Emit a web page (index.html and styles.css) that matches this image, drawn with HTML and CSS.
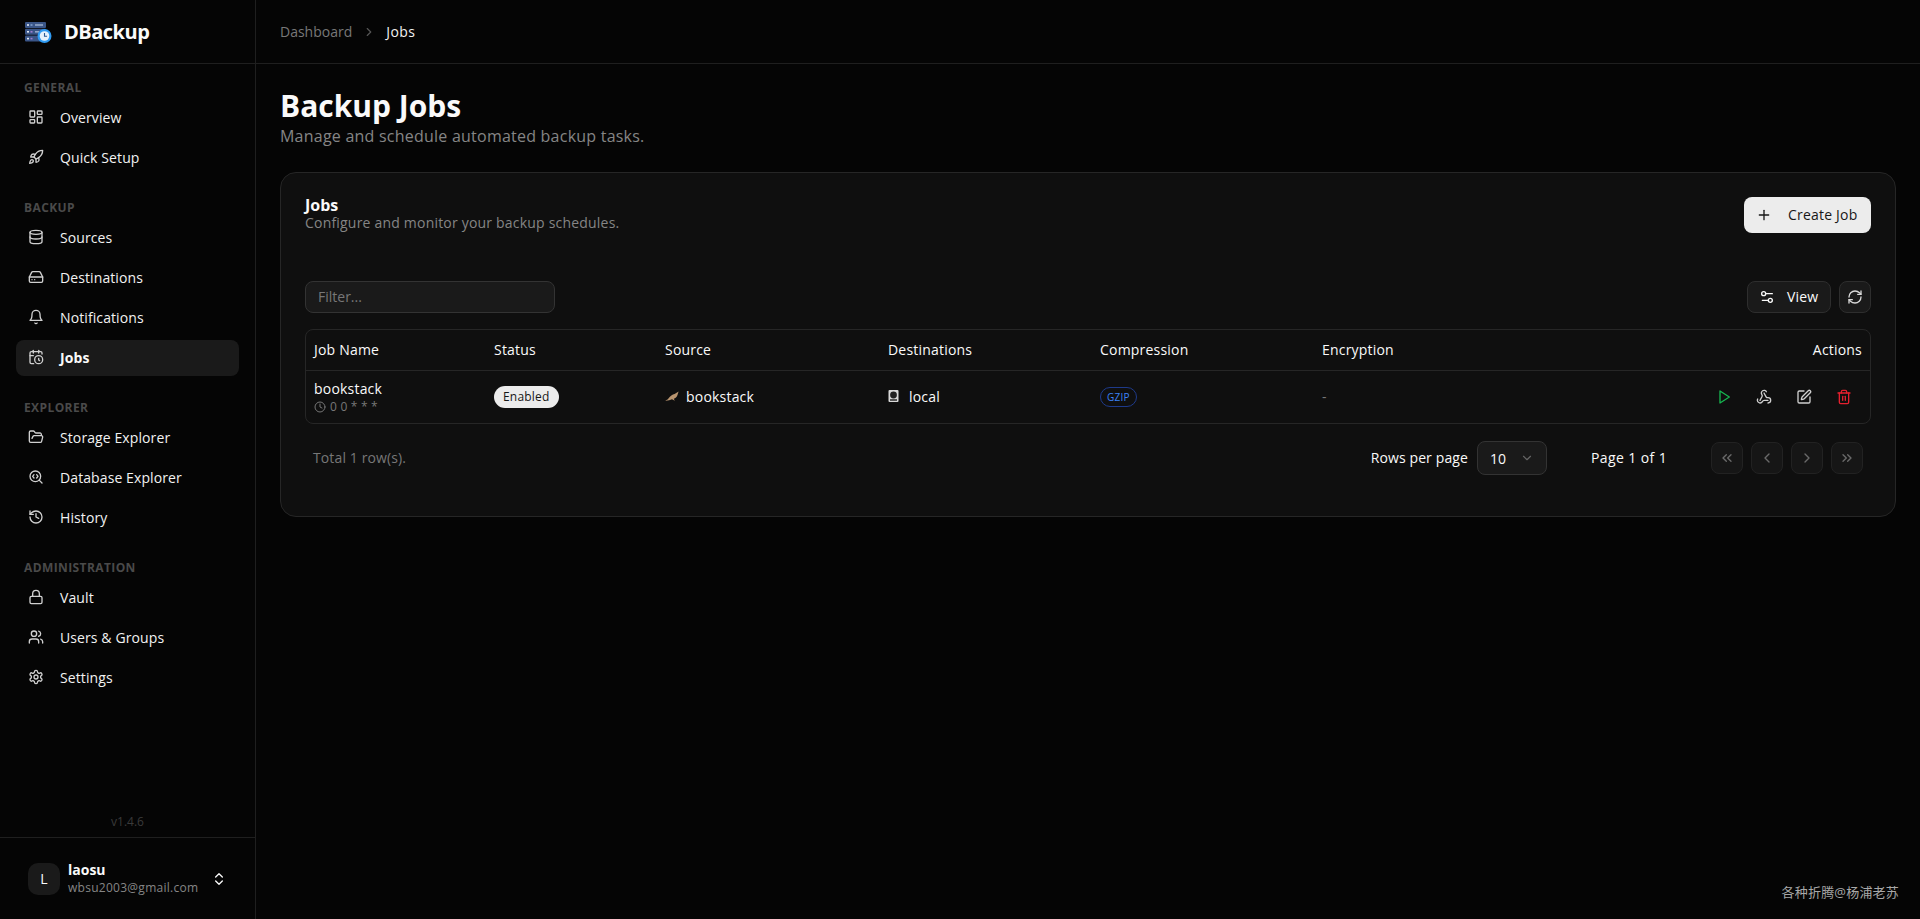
FILE: index.html
```html
<!DOCTYPE html>
<html lang="en">
<head>
    <meta charset="UTF-8">
    <meta name="viewport" content="width=device-width, initial-scale=1.0">
    <title>DBackup - Jobs</title>
    <link rel="stylesheet" href="styles.css">
</head>
<body>
    <svg class="sprite" aria-hidden="true">
        <symbol id="i-overview" viewBox="0 0 24 24"><rect x="3" y="3" width="7" height="9" rx="1"/><rect x="14" y="3" width="7" height="5" rx="1"/><rect x="14" y="12" width="7" height="9" rx="1"/><rect x="3" y="16" width="7" height="5" rx="1"/></symbol>
        <symbol id="i-rocket" viewBox="0 0 24 24"><path d="M4.5 16.5c-1.5 1.26-2 5-2 5s3.74-.5 5-2c.71-.84.7-2.13-.09-2.91a2.18 2.18 0 0 0-2.91-.09z"/><path d="m12 15-3-3a22 22 0 0 1 2-3.95A12.88 12.88 0 0 1 22 2c0 2.72-.78 7.5-6 11a22.35 22.35 0 0 1-4 2z"/><path d="M9 12H4s.55-3.03 2-4c1.62-1.08 5 0 5 0"/><path d="M12 15v5s3.03-.55 4-2c1.08-1.62 0-5 0-5"/></symbol>
        <symbol id="i-database" viewBox="0 0 24 24"><ellipse cx="12" cy="5" rx="9" ry="3"/><path d="M3 5V19A9 3 0 0 0 21 19V5"/><path d="M3 12A9 3 0 0 0 21 12"/></symbol>
        <symbol id="i-drive" viewBox="0 0 24 24"><line x1="22" y1="12" x2="2" y2="12"/><path d="M5.45 5.11 2 12v6a2 2 0 0 0 2 2h16a2 2 0 0 0 2-2v-6l-3.45-6.89A2 2 0 0 0 16.76 4H7.24a2 2 0 0 0-1.79 1.11z"/><line x1="6" y1="16" x2="6.01" y2="16"/><line x1="10" y1="16" x2="10.01" y2="16"/></symbol>
        <symbol id="i-bell" viewBox="0 0 24 24"><path d="M6 8a6 6 0 0 1 12 0c0 7 3 9 3 9H3s3-2 3-9"/><path d="M10.3 21a1.94 1.94 0 0 0 3.4 0"/></symbol>
        <symbol id="i-calendar" viewBox="0 0 24 24"><path d="M21 7.5V6a2 2 0 0 0-2-2H5a2 2 0 0 0-2 2v14a2 2 0 0 0 2 2h3.5"/><path d="M16 2v4"/><path d="M8 2v4"/><path d="M3 10h5"/><path d="M17.5 17.5 16 16.3V14"/><circle cx="16" cy="16" r="6"/></symbol>
        <symbol id="i-folder" viewBox="0 0 24 24"><path d="m6 14 1.5-2.9A2 2 0 0 1 9.24 10H20a2 2 0 0 1 1.94 2.5l-1.54 6a2 2 0 0 1-1.95 1.5H4a2 2 0 0 1-2-2V5a2 2 0 0 1 2-2h3.9a2 2 0 0 1 1.69.9l.81 1.2a2 2 0 0 0 1.67.9H18a2 2 0 0 1 2 2v2"/></symbol>
        <symbol id="i-search-code" viewBox="0 0 24 24"><path d="m13 13.5 2-2.5-2-2.5"/><path d="m21 21-4.3-4.3"/><path d="M9 8.5 7 11l2 2.5"/><circle cx="11" cy="11" r="8"/></symbol>
        <symbol id="i-history" viewBox="0 0 24 24"><path d="M3 12a9 9 0 1 0 9-9 9.75 9.75 0 0 0-6.74 2.74L3 8"/><path d="M3 3v5h5"/><path d="M12 7v5l4 2"/></symbol>
        <symbol id="i-lock" viewBox="0 0 24 24"><rect x="3" y="11" width="18" height="11" rx="2"/><path d="M7 11V7a5 5 0 0 1 10 0v4"/></symbol>
        <symbol id="i-users" viewBox="0 0 24 24"><path d="M16 21v-2a4 4 0 0 0-4-4H6a4 4 0 0 0-4 4v2"/><circle cx="9" cy="7" r="4"/><path d="M22 21v-2a4 4 0 0 0-3-3.87"/><path d="M16 3.13a4 4 0 0 1 0 7.75"/></symbol>
        <symbol id="i-settings" viewBox="0 0 24 24"><path d="M12.22 2h-.44a2 2 0 0 0-2 2v.18a2 2 0 0 1-1 1.73l-.43.25a2 2 0 0 1-2 0l-.15-.08a2 2 0 0 0-2.73.73l-.22.38a2 2 0 0 0 .73 2.73l.15.1a2 2 0 0 1 1 1.72v.51a2 2 0 0 1-1 1.74l-.15.09a2 2 0 0 0-.73 2.73l.22.38a2 2 0 0 0 2.73.73l.15-.08a2 2 0 0 1 2 0l.43.25a2 2 0 0 1 1 1.73V20a2 2 0 0 0 2 2h.44a2 2 0 0 0 2-2v-.18a2 2 0 0 1 1-1.73l.43-.25a2 2 0 0 1 2 0l.15.08a2 2 0 0 0 2.73-.73l.22-.39a2 2 0 0 0-.73-2.73l-.15-.08a2 2 0 0 1-1-1.74v-.5a2 2 0 0 1 1-1.74l.15-.09a2 2 0 0 0 .73-2.73l-.22-.38a2 2 0 0 0-2.73-.73l-.15.08a2 2 0 0 1-2 0l-.43-.25a2 2 0 0 1-1-1.73V4a2 2 0 0 0-2-2z"/><circle cx="12" cy="12" r="3"/></symbol>
        <symbol id="i-updown" viewBox="0 0 24 24"><path d="m7 15 5 5 5-5"/><path d="m7 9 5-5 5 5"/></symbol>
        <symbol id="i-plus" viewBox="0 0 24 24"><path d="M5 12h14"/><path d="M12 5v14"/></symbol>
        <symbol id="i-sliders" viewBox="0 0 24 24"><path d="M20 7h-9"/><path d="M14 17H5"/><circle cx="17" cy="17" r="3"/><circle cx="7" cy="7" r="3"/></symbol>
        <symbol id="i-refresh" viewBox="0 0 24 24"><path d="M3 12a9 9 0 0 1 9-9 9.75 9.75 0 0 1 6.74 2.74L21 8"/><path d="M21 3v5h-5"/><path d="M21 12a9 9 0 0 1-9 9 9.75 9.75 0 0 1-6.74-2.74L3 16"/><path d="M8 16H3v5"/></symbol>
        <symbol id="i-play" viewBox="0 0 24 24"><polygon points="6 3 20 12 6 21 6 3"/></symbol>
        <symbol id="i-webhook" viewBox="0 0 24 24"><path d="M18 16.98h-5.99c-1.1 0-1.95.94-2.48 1.9A4 4 0 0 1 2 17c.01-.7.2-1.4.57-2"/><path d="m6 17 3.13-5.78c.53-.97.1-2.18-.5-3.1a4 4 0 1 1 6.89-4.06"/><path d="m12 6 3.13 5.73C15.66 12.7 16.9 13 18 13a4 4 0 0 1 0 8"/></symbol>
        <symbol id="i-pen" viewBox="0 0 24 24"><path d="M12 3H5a2 2 0 0 0-2 2v14a2 2 0 0 0 2 2h14a2 2 0 0 0 2-2v-7"/><path d="M18.375 2.625a1 1 0 0 1 3 3l-9.013 9.014a2 2 0 0 1-.853.505l-2.873.84a.5.5 0 0 1-.62-.62l.84-2.873a2 2 0 0 1 .506-.852z"/></symbol>
        <symbol id="i-trash" viewBox="0 0 24 24"><path d="M3 6h18"/><path d="M19 6v14c0 1-1 2-2 2H7c-1 0-2-1-2-2V6"/><path d="M8 6V4c0-1 1-2 2-2h4c1 0 2 1 2 2v2"/><line x1="10" y1="11" x2="10" y2="17"/><line x1="14" y1="11" x2="14" y2="17"/></symbol>
        <symbol id="i-clock" viewBox="0 0 24 24"><circle cx="12" cy="12" r="10"/><polyline points="12 6 12 12 16 14"/></symbol>
        <symbol id="i-down" viewBox="0 0 24 24"><path d="m6 9 6 6 6-6"/></symbol>
        <symbol id="i-right" viewBox="0 0 24 24"><path d="m9 18 6-6-6-6"/></symbol>
        <symbol id="i-left" viewBox="0 0 24 24"><path d="m15 18-6-6 6-6"/></symbol>
        <symbol id="i-first" viewBox="0 0 24 24"><path d="m11 17-5-5 5-5"/><path d="m18 17-5-5 5-5"/></symbol>
        <symbol id="i-last" viewBox="0 0 24 24"><path d="m6 17 5-5-5-5"/><path d="m13 17 5-5-5-5"/></symbol>
    </svg>

    <div class="app">
        <aside class="sidebar">
            <div class="brand">
                <svg class="brand-logo" viewBox="0 0 28 24">
                    <rect x="0" y="2" width="21" height="6" rx="1" fill="#3a5587"/>
                    <rect x="0" y="8.8" width="21" height="6" rx="1" fill="#3a5587"/>
                    <rect x="0" y="15.6" width="21" height="6" rx="1" fill="#3a5587"/>
                    <rect x="2" y="4.2" width="2" height="1.6" fill="#dfe6f0"/>
                    <rect x="5.5" y="4.2" width="2" height="1.6" fill="#7fa0cc"/>
                    <rect x="10" y="4.2" width="8" height="1.6" fill="#93a8c8"/>
                    <rect x="2" y="11" width="2" height="1.6" fill="#dfe6f0"/>
                    <rect x="5.5" y="11" width="2" height="1.6" fill="#9d7ed0"/>
                    <rect x="10" y="11" width="4" height="1.6" fill="#93a8c8"/>
                    <rect x="2" y="17.8" width="2" height="1.6" fill="#dfe6f0"/>
                    <rect x="5.5" y="17.8" width="2" height="1.6" fill="#9d7ed0"/>
                    <circle cx="19.5" cy="16" r="7" fill="#2f9bf2"/>
                    <circle cx="19.5" cy="16" r="4.8" fill="#e6f2fc"/>
                    <path d="M19.5 13v3.2h2.6" fill="none" stroke="#2a5a94" stroke-width="1.1"/>
                </svg>
                <span class="brand-name">DBackup</span>
            </div>

            <nav class="nav">
                <div class="nav-group">
                    <div class="nav-label">GENERAL</div>
                    <a class="nav-item"><svg class="icon"><use href="#i-overview"/></svg>Overview</a>
                    <a class="nav-item"><svg class="icon"><use href="#i-rocket"/></svg>Quick Setup</a>
                </div>
                <div class="nav-group">
                    <div class="nav-label">BACKUP</div>
                    <a class="nav-item"><svg class="icon"><use href="#i-database"/></svg>Sources</a>
                    <a class="nav-item"><svg class="icon"><use href="#i-drive"/></svg>Destinations</a>
                    <a class="nav-item"><svg class="icon"><use href="#i-bell"/></svg>Notifications</a>
                    <a class="nav-item active"><svg class="icon"><use href="#i-calendar"/></svg>Jobs</a>
                </div>
                <div class="nav-group">
                    <div class="nav-label">EXPLORER</div>
                    <a class="nav-item"><svg class="icon"><use href="#i-folder"/></svg>Storage Explorer</a>
                    <a class="nav-item"><svg class="icon"><use href="#i-search-code"/></svg>Database Explorer</a>
                    <a class="nav-item"><svg class="icon"><use href="#i-history"/></svg>History</a>
                </div>
                <div class="nav-group">
                    <div class="nav-label">ADMINISTRATION</div>
                    <a class="nav-item"><svg class="icon"><use href="#i-lock"/></svg>Vault</a>
                    <a class="nav-item"><svg class="icon"><use href="#i-users"/></svg>Users &amp; Groups</a>
                    <a class="nav-item"><svg class="icon"><use href="#i-settings"/></svg>Settings</a>
                </div>
            </nav>

            <div class="version">v1.4.6</div>
            <div class="user">
                <div class="avatar">L</div>
                <div class="user-info">
                    <div class="user-name">laosu</div>
                    <div class="user-mail">wbsu2003@gmail.com</div>
                </div>
                <svg class="icon user-toggle"><use href="#i-updown"/></svg>
            </div>
        </aside>

        <div class="content">
            <header class="topbar">
                <span class="crumb">Dashboard</span>
                <svg class="icon crumb-sep"><use href="#i-right"/></svg>
                <span class="crumb-current">Jobs</span>
            </header>

            <main class="main">
                <h1 class="page-title">Backup Jobs</h1>
                <p class="page-sub">Manage and schedule automated backup tasks.</p>

                <section class="card">
                    <div class="card-head">
                        <div>
                            <h2 class="card-title">Jobs</h2>
                            <p class="card-sub">Configure and monitor your backup schedules.</p>
                        </div>
                        <button class="btn btn-primary"><svg class="icon"><use href="#i-plus"/></svg><span>Create Job</span></button>
                    </div>

                    <div class="toolbar">
                        <input class="filter" type="text" placeholder="Filter...">
                        <div class="toolbar-right">
                            <button class="btn btn-outline"><svg class="icon"><use href="#i-sliders"/></svg><span>View</span></button>
                            <button class="btn-square"><svg class="icon"><use href="#i-refresh"/></svg></button>
                        </div>
                    </div>

                    <div class="table-wrap">
                        <table class="jobs">
                            <colgroup>
                                <col class="col-name"><col class="col-status"><col class="col-source"><col class="col-dest"><col class="col-comp"><col class="col-enc"><col>
                            </colgroup>
                            <thead>
                                <tr>
                                    <th>Job Name</th>
                                    <th>Status</th>
                                    <th>Source</th>
                                    <th>Destinations</th>
                                    <th>Compression</th>
                                    <th>Encryption</th>
                                    <th class="th-actions">Actions</th>
                                </tr>
                            </thead>
                            <tbody>
                                <tr>
                                    <td>
                                        <div class="job-name">bookstack</div>
                                        <div class="job-cron"><svg class="icon icon-xs"><use href="#i-clock"/></svg>0 0 * * *</div>
                                    </td>
                                    <td><span class="badge-status">Enabled</span></td>
                                    <td>
                                        <span class="cell-icon">
                                            <svg class="mini" viewBox="0 0 14 10"><path d="M0 9.6c1.6-.3 2.6-1.1 3.6-2.4C5.2 5 7.4 3.4 9.6 3l4-2.6-1.2 3.8c-.6 1.8-2 3-3.6 3.6l1 2-2.8-1.6C5 8.9 2.4 10 0 9.6z" fill="#b8946f"/></svg>
                                            bookstack
                                        </span>
                                    </td>
                                    <td>
                                        <span class="cell-icon">
                                            <svg class="mini-drive" viewBox="0 0 10 12"><rect width="10" height="12" rx="1" fill="#d8d8d8"/><circle cx="5" cy="5" r="3.4" fill="#222"/><rect x="1.5" y="9.2" width="7" height="1.6" fill="#333"/></svg>
                                            local
                                        </span>
                                    </td>
                                    <td><span class="badge-comp">GZIP</span></td>
                                    <td class="muted-dash">-</td>
                                    <td>
                                        <div class="actions">
                                            <button class="act act-play"><svg class="icon"><use href="#i-play"/></svg></button>
                                            <button class="act"><svg class="icon"><use href="#i-webhook"/></svg></button>
                                            <button class="act"><svg class="icon"><use href="#i-pen"/></svg></button>
                                            <button class="act act-del"><svg class="icon"><use href="#i-trash"/></svg></button>
                                        </div>
                                    </td>
                                </tr>
                            </tbody>
                        </table>
                    </div>

                    <div class="pager">
                        <span class="pager-total">Total 1 row(s).</span>
                        <div class="pager-right">
                            <span class="pager-rows">Rows per page</span>
                            <div class="select">10<svg class="icon"><use href="#i-down"/></svg></div>
                            <span class="pager-page">Page 1 of 1</span>
                            <div class="pager-btns">
                                <button class="page-btn"><svg class="icon"><use href="#i-first"/></svg></button>
                                <button class="page-btn"><svg class="icon"><use href="#i-left"/></svg></button>
                                <button class="page-btn"><svg class="icon"><use href="#i-right"/></svg></button>
                                <button class="page-btn"><svg class="icon"><use href="#i-last"/></svg></button>
                            </div>
                        </div>
                    </div>
                </section>
            </main>
        </div>
    </div>

    <div class="watermark">各种折腾@杨浦老苏</div>
</body>
</html>
```

FILE: styles.css
```css
* {
    margin: 0;
    padding: 0;
    box-sizing: border-box;
    font-family: 'Open Sans', 'Noto Sans CJK SC', sans-serif;
}

html, body {
    width: 100%;
    height: 100%;
    overflow: hidden;
    background-color: #050505;
    color: #fafafa;
    font-size: 14px;
}

.sprite {
    display: none;
}

.icon {
    width: 16px;
    height: 16px;
    flex-shrink: 0;
    fill: none;
    stroke: currentColor;
    stroke-width: 2;
    stroke-linecap: round;
    stroke-linejoin: round;
}

.icon-xs {
    width: 12px;
    height: 12px;
}

.app {
    display: flex;
    height: 100%;
}

/* sidebar */
.sidebar {
    width: 256px;
    flex-shrink: 0;
    display: flex;
    flex-direction: column;
    border-right: 1px solid #1f1f1f;
}

.brand {
    height: 64px;
    flex-shrink: 0;
    display: flex;
    align-items: center;
    gap: 11px;
    padding-left: 25px;
    border-bottom: 1px solid #1f1f1f;
}

.brand-logo {
    width: 28px;
    height: 24px;
}

.brand-name {
    font-size: 20px;
    font-weight: 700;
    letter-spacing: -0.5px;
}

.nav {
    flex: 1;
    padding: 16px 16px 0;
    display: flex;
    flex-direction: column;
    gap: 24px;
}

.nav-group {
    display: flex;
    flex-direction: column;
    gap: 4px;
}

.nav-label {
    height: 16px;
    line-height: 16px;
    padding-left: 8px;
    font-size: 12px;
    font-weight: 700;
    letter-spacing: 0.4px;
    color: #4a4a4a;
}

.nav-item {
    height: 36px;
    display: flex;
    align-items: center;
    gap: 16px;
    padding: 0 0 2px 12px;
    border-radius: 8px;
    letter-spacing: 0.1px;
    color: #f2f2f2;
}

.nav-item .icon {
    color: #d0d0d0;
}

.nav-item.active {
    background-color: #1a1a1a;
    font-weight: 700;
    color: #fafafa;
}

.version {
    text-align: center;
    font-size: 12px;
    color: #3a3a3a;
    padding-bottom: 7px;
}

.user {
    height: 82px;
    flex-shrink: 0;
    display: flex;
    align-items: center;
    padding-left: 28px;
    border-top: 1px solid #1f1f1f;
}

.avatar {
    width: 32px;
    height: 32px;
    border-radius: 10px;
    background-color: #1a1a1a;
    display: flex;
    align-items: center;
    justify-content: center;
}

.user-info {
    margin-left: 8px;
    width: 143px;
}

.user-name {
    font-weight: 700;
    font-size: 14px;
    line-height: 16px;
}

.user-mail {
    margin-top: 2px;
    font-size: 12px;
    line-height: 16px;
    letter-spacing: 0.27px;
    color: #858585;
}

/* topbar */
.content {
    flex: 1;
    min-width: 0;
}

.topbar {
    height: 64px;
    display: flex;
    align-items: center;
    gap: 10px;
    padding-left: 24px;
    border-bottom: 1px solid #1f1f1f;
}

.crumb {
    color: #787878;
}

.crumb-sep {
    width: 14px;
    height: 14px;
    color: #555;
}

.crumb-current {
    letter-spacing: 0.4px;
    color: #f2f2f2;
}

/* page */
.main {
    padding: 24px;
}

.page-title {
    font-size: 30px;
    line-height: 36px;
    font-weight: 700;
}

.page-sub {
    font-size: 16px;
    line-height: 24px;
    letter-spacing: 0.23px;
    color: #858585;
}

.card {
    margin-top: 24px;
    height: 345px;
    padding: 24px;
    background-color: #0f0f0f;
    border: 1px solid #262626;
    border-radius: 16px;
}

.card-head {
    display: flex;
    justify-content: space-between;
    align-items: flex-start;
}

.card-title {
    font-size: 16px;
    line-height: 16px;
    font-weight: 700;
}

.card-sub {
    font-size: 14px;
    line-height: 20px;
    letter-spacing: 0.2px;
    color: #858585;
}

.btn {
    display: flex;
    align-items: center;
    border: none;
    border-radius: 8px;
    font-size: 14px;
    letter-spacing: 0.2px;
    color: #fafafa;
}

.btn span {
    margin-top: -2px;
}

.btn-primary {
    height: 36px;
    width: 127px;
    padding-left: 12px;
    gap: 16px;
    background-color: #ececec;
    color: #171717;
}

.btn-outline {
    height: 32px;
    width: 84px;
    padding-left: 11px;
    gap: 12px;
    background-color: #1a1a1a;
    border: 1px solid #2e2e2e;
}

.toolbar {
    margin-top: 48px;
    display: flex;
    justify-content: space-between;
    align-items: center;
}

.toolbar-right {
    display: flex;
    gap: 8px;
}

.filter {
    width: 250px;
    height: 32px;
    padding: 0 12px 2px;
    background-color: #1a1a1a;
    border: 1px solid #333;
    border-radius: 8px;
    font-size: 14px;
    color: #fafafa;
    outline: none;
}

.filter::placeholder {
    color: #777;
}

.btn-square {
    width: 32px;
    height: 32px;
    display: flex;
    align-items: center;
    justify-content: center;
    background-color: #1a1a1a;
    border: 1px solid #2e2e2e;
    border-radius: 8px;
    color: #d8d8d8;
}

/* table */
.table-wrap {
    margin-top: 16px;
    border: 1px solid #262626;
    border-radius: 8px;
}

.jobs {
    width: 100%;
    table-layout: fixed;
    border-collapse: collapse;
    letter-spacing: 0.2px;
}

.col-name { width: 180px; }
.col-status { width: 171px; }
.col-source { width: 223px; }
.col-dest { width: 212px; }
.col-comp { width: 222px; }
.col-enc { width: 200px; }

.jobs th {
    height: 40px;
    padding: 0 8px;
    text-align: left;
    font-weight: 400;
    border-bottom: 1px solid #262626;
}

.jobs th.th-actions {
    text-align: right;
}

.jobs td {
    height: 53px;
    padding: 0 8px;
}

.job-name {
    margin-top: 2px;
    line-height: 17px;
}

.job-cron {
    display: flex;
    align-items: center;
    gap: 4px;
    margin-top: 2px;
    font-size: 12px;
    line-height: 16px;
    color: #777;
}

.badge-status {
    display: inline-flex;
    align-items: center;
    height: 22px;
    padding: 0 9px;
    border-radius: 11px;
    background-color: #ececec;
    color: #171717;
    font-size: 12px;
}

.cell-icon {
    display: inline-flex;
    align-items: center;
    gap: 7px;
    margin-bottom: 2px;
    vertical-align: middle;
}

.mini {
    width: 14px;
    height: 10px;
}

.mini-drive {
    width: 11px;
    height: 12px;
    margin-right: 3px;
}

.badge-comp {
    display: inline-flex;
    align-items: center;
    height: 20px;
    padding: 0 6px;
    border: 1px solid #1e3a8a;
    border-radius: 10px;
    color: #3b82f6;
    font-size: 10px;
}

.muted-dash {
    color: #777;
}

.actions {
    display: flex;
    justify-content: flex-end;
    gap: 8px;
    margin-right: 2px;
}

.act {
    width: 32px;
    height: 32px;
    display: flex;
    align-items: center;
    justify-content: center;
    background: none;
    border: none;
    color: #d0d0d0;
}

.act-play { color: #16b650; }
.act-del { color: #e5202e; }

/* pagination */
.pager {
    margin-top: 17px;
    padding: 0 8px;
    height: 34px;
    display: flex;
    justify-content: space-between;
    align-items: center;
    letter-spacing: 0.12px;
}

.pager-total {
    margin-bottom: 2px;
    color: #777;
}

.pager-right {
    display: flex;
    align-items: center;
}

.pager-rows {
    margin-bottom: 2px;
}

.select {
    width: 70px;
    height: 34px;
    margin-left: 9px;
    padding: 0 12px;
    display: flex;
    align-items: center;
    justify-content: space-between;
    background-color: #1a1a1a;
    border: 1px solid #333;
    border-radius: 8px;
}

.select .icon {
    width: 14px;
    height: 14px;
    color: #666;
}

.pager-page {
    margin: 0 0 2px 44px;
    width: 120px;
    letter-spacing: 0.4px;
}

.pager-btns {
    display: flex;
    gap: 8px;
}

.page-btn {
    width: 32px;
    height: 32px;
    display: flex;
    align-items: center;
    justify-content: center;
    background-color: #161616;
    border: 1px solid #222;
    border-radius: 8px;
    color: #6a6a6a;
}

.watermark {
    position: absolute;
    right: 21px;
    bottom: 18px;
    font-size: 13px;
    letter-spacing: 0.2px;
    color: #a8a8a8;
}
```
